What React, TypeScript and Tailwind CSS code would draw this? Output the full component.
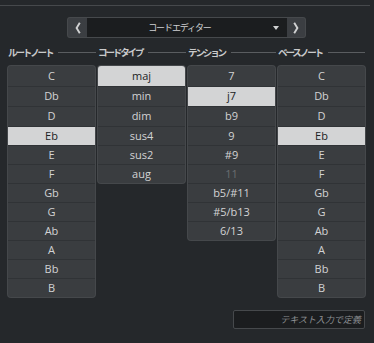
import React from 'react';

const roots = ['C', 'Db', 'D', 'Eb', 'E', 'F', 'Gb', 'G', 'Ab', 'A', 'Bb', 'B'];
const types = ['maj', 'min', 'dim', 'sus4', 'sus2', 'aug'];
const tensions = ['7', 'j7', 'b9', '9', '#9', '11', 'b5/#11', '#5/b13', '6/13'];

const jp = { fontFamily: '"Noto Sans CJK JP", "Noto Sans", sans-serif' };
const latin = { fontFamily: '"Open Sans", "Noto Sans", sans-serif' };

// 1列分のリスト
const Column = ({ items, selected, disabled = [] }: { items: string[]; selected: string; disabled?: string[] }) => (
  <div className="w-[87px] flex flex-col rounded-[3px] overflow-hidden bg-[#3a3d40] ring-1 ring-[#45484b]">
    {items.map((it, i) => {
      const sel = it === selected;
      const dim = disabled.includes(it);
      return (
        <div
          key={it}
          className={
            (i < 3 ? 'h-[20px] ' : 'h-[19px] ') +
            (i > 0 ? 'border-t border-[#303336] ' : '') +
            'flex items-center justify-center text-[11px] ' +
            (sel ? 'bg-[#d3d4d5] text-[#202224]' : dim ? 'text-[#6b6e71]' : 'text-[#d2d3d4]')
          }
          style={latin}
        >
          {it}
        </div>
      );
    })}
  </div>
);

const Label = ({ text, last }: { text: string; last?: boolean }) => (
  <div className="w-[90px] flex items-center">
    <span className="text-[9.5px] font-bold tracking-[-2.1px] text-[#c9cacb] whitespace-nowrap" style={jp}>{text}</span>
    <div className={'flex-1 h-px bg-[#5a5d60] ml-[6px] ' + (last ? 'mr-[3px]' : 'mr-[2px]')} />
  </div>
);

export default function App() {
  return (
    <div className="w-[374px] h-[343px] bg-[#25282b] overflow-hidden">
      <div className="pt-[5px]">
        <div className="w-[370px] h-px bg-[#46494c]" />
      </div>

      {/* 上部セレクター */}
      <div className="mt-[12px] ml-[68px] w-[237px] h-[19px] flex rounded-[2px] overflow-hidden bg-[#3b3e42] ring-1 ring-[#46494c]">
        <div className="w-[19px] flex items-center justify-center">
          <svg width="6" height="12" viewBox="0 0 6 12">
            <path d="M4.8 0.8 L1.6 6 L4.8 11.2" fill="none" stroke="#d0d1d2" strokeWidth="1.9" />
          </svg>
        </div>
        <div className="flex-1 bg-[#1b1d1f] flex items-center relative pr-[15px]">
          <span className="w-full text-center text-[9px] tracking-[-1.1px] text-[#d0d1d2]" style={jp}>コードエディター</span>
          <span className="absolute right-[8px] top-[8px] w-0 h-0 border-l-[3px] border-r-[3px] border-t-[4px] border-l-transparent border-r-transparent border-t-[#d0d1d2]" />
        </div>
        <div className="w-[18px] flex items-center justify-center">
          <svg width="6" height="12" viewBox="0 0 6 12">
            <path d="M1.2 0.8 L4.4 6 L1.2 11.2" fill="none" stroke="#d0d1d2" strokeWidth="1.9" />
          </svg>
        </div>
      </div>

      {/* 見出し */}
      <div className="mt-[7px] ml-[8px] flex h-[16px]">
        <Label text="ルートノート" />
        <Label text="コードタイプ" />
        <Label text="テンション" />
        <Label text="ベースノート" last />
      </div>

      <div className="mt-[6px] ml-[8px] flex items-start gap-[3px]">
        <Column items={roots} selected="Eb" />
        <Column items={types} selected="maj" />
        <Column items={tensions} selected="j7" disabled={['11']} />
        <Column items={roots} selected="Eb" />
      </div>

      <div className="mt-[13px] ml-[233px] w-[132px] h-[19px] rounded-[2px] bg-[#1b1d1f] border border-[#46494c] flex items-center justify-end pr-[3px]">
        <span className="text-[9px] italic text-[#8c8f92]" style={jp}>テキスト入力で定義</span>
      </div>
    </div>
  );
}
